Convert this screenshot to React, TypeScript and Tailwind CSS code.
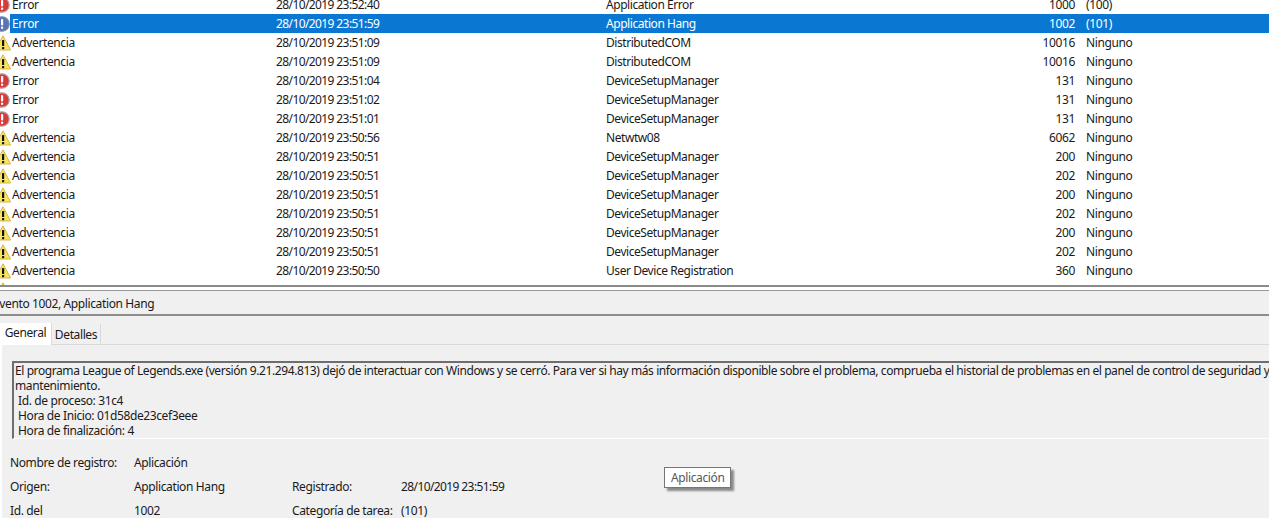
import React from "react";

type Level = "Error" | "Advertencia";

interface EventRow {
  level: Level;
  date: string;
  source: string;
  id: string;
  category: string;
  selected?: boolean;
}

const rows: EventRow[] = [
  { level: "Error", date: "28/10/2019 23:52:40", source: "Application Error", id: "1000", category: "(100)" },
  { level: "Error", date: "28/10/2019 23:51:59", source: "Application Hang", id: "1002", category: "(101)", selected: true },
  { level: "Advertencia", date: "28/10/2019 23:51:09", source: "DistributedCOM", id: "10016", category: "Ninguno" },
  { level: "Advertencia", date: "28/10/2019 23:51:09", source: "DistributedCOM", id: "10016", category: "Ninguno" },
  { level: "Error", date: "28/10/2019 23:51:04", source: "DeviceSetupManager", id: "131", category: "Ninguno" },
  { level: "Error", date: "28/10/2019 23:51:02", source: "DeviceSetupManager", id: "131", category: "Ninguno" },
  { level: "Error", date: "28/10/2019 23:51:01", source: "DeviceSetupManager", id: "131", category: "Ninguno" },
  { level: "Advertencia", date: "28/10/2019 23:50:56", source: "Netwtw08", id: "6062", category: "Ninguno" },
  { level: "Advertencia", date: "28/10/2019 23:50:51", source: "DeviceSetupManager", id: "200", category: "Ninguno" },
  { level: "Advertencia", date: "28/10/2019 23:50:51", source: "DeviceSetupManager", id: "202", category: "Ninguno" },
  { level: "Advertencia", date: "28/10/2019 23:50:51", source: "DeviceSetupManager", id: "200", category: "Ninguno" },
  { level: "Advertencia", date: "28/10/2019 23:50:51", source: "DeviceSetupManager", id: "202", category: "Ninguno" },
  { level: "Advertencia", date: "28/10/2019 23:50:51", source: "DeviceSetupManager", id: "200", category: "Ninguno" },
  { level: "Advertencia", date: "28/10/2019 23:50:51", source: "DeviceSetupManager", id: "202", category: "Ninguno" },
  { level: "Advertencia", date: "28/10/2019 23:50:50", source: "User Device Registration", id: "360", category: "Ninguno" },
];

const ErrorIcon = ({ selected }: { selected?: boolean }) => (
  <svg width="16" height="16" viewBox="0 0 16 16" className="-ml-[6px] shrink-0">
    <circle cx="8" cy="8" r="7.2" fill={selected ? "#5a74b4" : "#d43c3c"} stroke={selected ? "#7a86a8" : "#b89c9c"} strokeWidth="1.2" />
    <rect x="7" y="3" width="2.2" height="6.5" rx="0.9" fill="#fff" />
    <rect x="7" y="10.5" width="2.2" height="2.4" rx="1" fill="#fff" />
  </svg>
);

const WarningIcon = () => (
  <svg width="16" height="16" viewBox="0 0 16 16" className="-ml-[5px] mr-[-1px] shrink-0">
    <path d="M8 0.8 L15.6 15 H0.4 Z" fill="#f8e45e" stroke="#d6b648" strokeWidth="1" strokeLinejoin="round" />
    <rect x="7" y="5" width="2.2" height="6" rx="0.6" fill="#111" />
    <rect x="7" y="12" width="2.2" height="2.2" rx="0.6" fill="#111" />
  </svg>
);

const Row = ({ row }: { row: EventRow }) => (
  <div className="flex h-[19px] items-center">
    {row.level === "Error" ? <ErrorIcon selected={row.selected} /> : <WarningIcon />}
    <div className={`flex h-[19px] flex-1 items-center ${row.selected ? "bg-[#0a78d2] text-white" : ""}`}>
      <span className="w-[266px] pl-[2px]">{row.level}</span>
      <span className="w-[330px] tracking-[-0.6px]">{row.date}</span>
      <span className="w-[400px] tracking-[-0.44px]">{row.source}</span>
      <span className="w-[69px] text-right">{row.id}</span>
      <span className="ml-[11px]">{row.category}</span>
    </div>
  </div>
);

const Field = ({ label, value }: { label: string; value: string }) => (
  <div className="flex">
    <span className="w-[124px]">{label}</span>
    <span>{value}</span>
  </div>
);

export default function App() {
  return (
    <div className="flex h-[518px] w-[1269px] flex-col overflow-hidden bg-white text-[12px] leading-[19px] tracking-[-0.38px] text-[#1a1a1a] [font-family:'Noto_Sans',sans-serif]">
      <div className="h-[285px] shrink-0 overflow-hidden">
        <div className="-mt-[5px]">
          {rows.map((row, i) => (
            <Row key={i} row={row} />
          ))}
          <div className="flex h-[19px] items-center">
            <WarningIcon />
          </div>
        </div>
      </div>

      <div className="relative flex flex-1 flex-col bg-[#f0f0f0]">
        <div className="h-[2px] bg-[#8a8a8a]" />
        <div className="h-[3px] bg-white" />
        <div className="-ml-[7px] flex h-[24px] items-center whitespace-nowrap border-t border-[#9a9a9a] pt-[1px]">
          Evento 1002, Application Hang
        </div>
        <div className="h-[2px] bg-[#8c8c8c]" />

        <div className="mt-[7px] flex h-[22px] items-end border-b border-[#d9d9d9]">
          <div className="-mb-[1px] flex h-[22px] w-[52px] justify-center border-r border-[#d9d9d9] bg-white">General</div>
          <div className="flex h-[20px] w-[49px] items-center justify-center border-r border-[#d9d9d9] bg-[#f0f0f0]">Detalles</div>
        </div>

        <div className="flex-1 border-l-2 border-white">
          <div className="mt-[16px] ml-[10px] h-[78px] overflow-hidden border-t-2 border-l-2 border-b border-t-[#6e6e6e] border-l-[#6e6e6e] border-b-white pl-[1px] leading-[15px]">
            <p className="whitespace-nowrap tracking-[-0.415px]">
              El programa League of Legends.exe (versión 9.21.294.813) dejó de interactuar con Windows y se cerró. Para ver si hay más información disponible sobre el problema, comprueba el historial de problemas en el panel de control de seguridad y
            </p>
            <p>mantenimiento.</p>
            <p className="pl-[3px]">Id. de proceso: 31c4</p>
            <p className="pl-[3px]">Hora de Inicio: 01d58de23cef3eee</p>
            <p className="pl-[3px]">Hora de finalización: 4</p>
          </div>

          <div className="mt-[14px] ml-[8px] flex flex-col gap-[5px]">
            <Field label="Nombre de registro:" value="Aplicación" />
            <div className="flex">
              <div className="w-[282px]">
                <Field label="Origen:" value="Application Hang" />
              </div>
              <span className="w-[109px]">Registrado:</span>
              <span className="tracking-[-0.6px]">28/10/2019 23:51:59</span>
            </div>
            <div className="flex">
              <div className="w-[282px]">
                <Field label="Id. del" value="1002" />
              </div>
              <span className="w-[109px]">Categoría de tarea:</span>
              <span>(101)</span>
            </div>
          </div>
        </div>

        <div className="absolute left-[664px] top-[182px] border border-[#767676] bg-white px-[6px] py-0 text-[#575757] shadow-[3px_3px_2px_#8a8a8a]">
          Aplicación
        </div>
      </div>
    </div>
  );
}
